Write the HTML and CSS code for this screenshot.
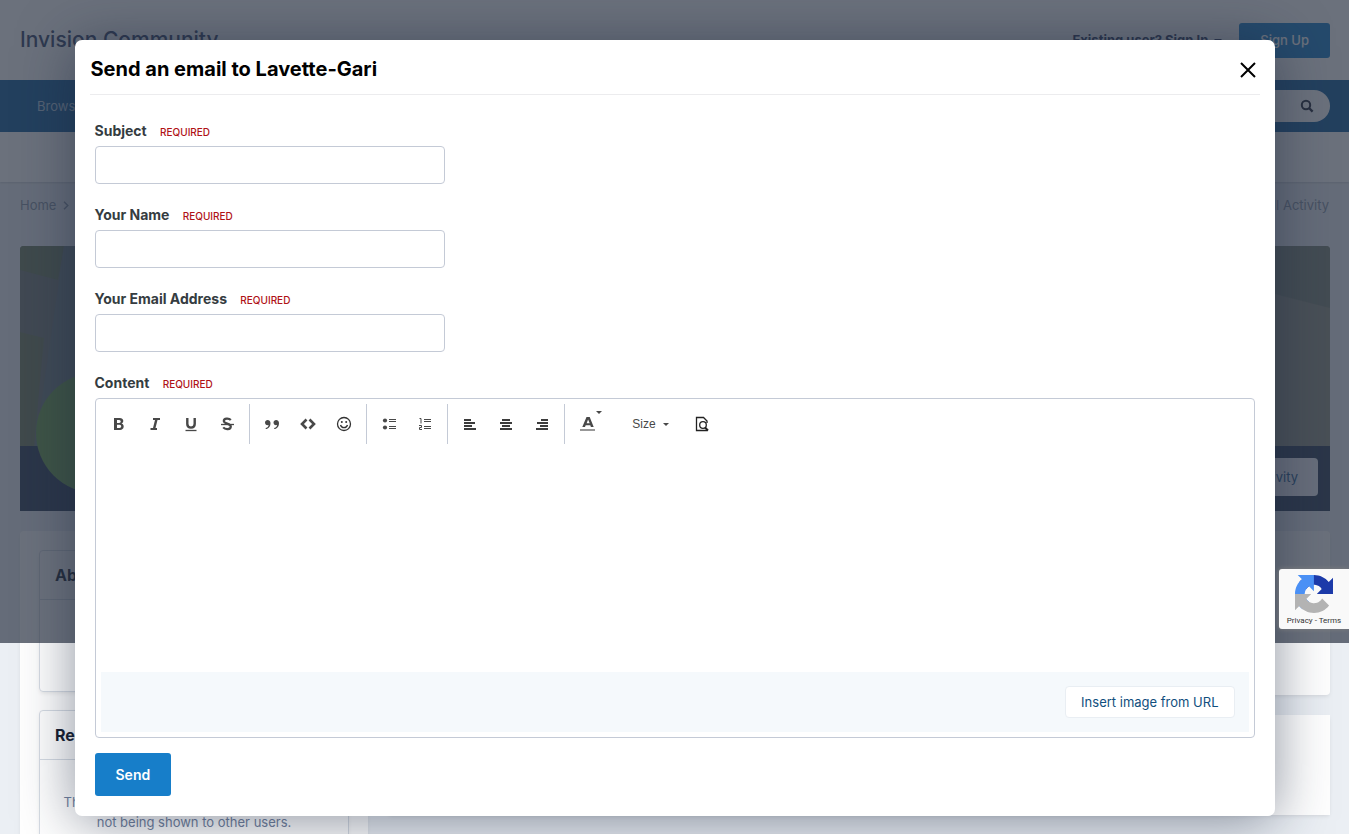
FILE: index.html
```html
<!DOCTYPE html>
<html lang="en">
<head>
<meta charset="utf-8">
<title>Send an email to Lavette-Gari</title>
<link rel="stylesheet" href="styles.css">
</head>
<body>
<div class="page">
  <header class="header">
    <a class="brand" href="#">Invision Community</a>
    <div class="user-nav">
      <a class="sign-in" href="#">Existing user? Sign In <span class="caret"></span></a>
      <a class="sign-up" href="#">Sign Up</a>
    </div>
  </header>
  <nav class="nav">
    <a class="nav-link" href="#">Browse</a>
    <button class="search" type="button" aria-label="Search">
      <svg width="14" height="14" viewBox="0 0 14 14" fill="none" stroke="currentColor" stroke-width="2"><circle cx="6" cy="6" r="4.2"/><path d="M9 9l3.6 3.6" stroke-width="2.4"/></svg>
    </button>
  </nav>
  <div class="subnav"></div>
  <div class="crumbs">
    <a class="crumb" href="#">Home <svg width="6" height="9" viewBox="0 0 6 9" fill="none" stroke="currentColor" stroke-width="1.4"><path d="M1 .7l3.8 3.8L1 8.3"/></svg></a>
    <a class="crumb" href="#">All Activity</a>
  </div>
  <section class="cover">
    <svg class="cover-art" viewBox="0 0 1310 200" preserveAspectRatio="none" aria-hidden="true">
      <rect width="1310" height="200" fill="#7d8475"/>
      <path d="M0 0H52L15 200H0z" fill="#737b76"/>
      <path d="M0 0H44L38 34L0 24z" fill="#6b7c5f"/>
      <path d="M0 86L24 92L14 200H0z" fill="#6f7d60"/>
      <path d="M44 0H250V200H15z" fill="#6c7c80"/>
      <path d="M1200 0H1310V62L1200 34z" fill="#7b8477"/>
      <path d="M1200 34L1310 62V200H1200z" fill="#8c8f82"/>
    </svg>
    <div class="cover-bar">
      <span class="avatar"></span>
      <a class="cover-link" href="#">See their activity</a>
    </div>
  </section>
  <div class="columns">
    <aside class="side">
      <section class="card about"><h3 class="card-title">About</h3></section>
      <section class="card"><h3 class="card-title">Recent Profile Visitors</h3>
        <p class="card-text">The recent visitors block is disabled and is not being shown to other users.</p>
      </section>
    </aside>
    <main class="feed">
      <section class="panel panel-tall"></section>
      <section class="panel"></section>
    </main>
  </div>
</div>
<div class="overlay"></div>
<div class="dialog-layer">
  <div class="dialog" role="dialog" aria-labelledby="dialog-title">
    <div class="dialog-head">
      <h2 class="dialog-title" id="dialog-title">Send an email to Lavette-Gari</h2>
      <button class="close" type="button" aria-label="Close"><svg width="16" height="16" viewBox="0 0 16 16" fill="none" stroke="#000" stroke-width="2"><path d="M1 1l14 14M15 1L1 15"/></svg></button>
    </div>
    <form class="form">
      <div class="field"><label class="label" for="subject">Subject <span class="required">REQUIRED</span></label><input class="text" id="subject" type="text"></div>
      <div class="field"><label class="label" for="name">Your Name <span class="required">REQUIRED</span></label><input class="text" id="name" type="text"></div>
      <div class="field"><label class="label" for="email">Your Email Address <span class="required">REQUIRED</span></label><input class="text" id="email" type="email"></div>
      <div class="field"><label class="label" for="content">Content <span class="required">REQUIRED</span></label>
        <div class="editor">
          <div class="toolbar">
            <div class="group">
              <button class="tool" type="button" aria-label="Bold"><svg width="16" height="16" viewBox="0 0 16 16"><path fill="#484848" fill-rule="evenodd" d="M3 2h5.8c4 0 4.6 4.4 1.7 5.6C14 8.700 13.300 14 9 14H3zm3 2v3h2.200c2 0 2-3 0-3zm0 4.800V12h2.500c2.300 0 2.300-3.200 0-3.200z"/></svg></button>
              <button class="tool" type="button" aria-label="Italic"><svg width="16" height="16" viewBox="0 0 16 16" fill="none" stroke="#484848"><path d="M6 3h7M3.500 13h6.500" stroke-width="2"/><path d="M9.500 3L7 13" stroke-width="2.400"/></svg></button>
              <button class="tool" type="button" aria-label="Underline"><svg width="16" height="16" viewBox="0 0 16 16" fill="none" stroke="#484848"><path d="M4.300 2v6c0 4.800 7.400 4.800 7.400 0V2" stroke-width="2.400"/><path d="M2.500 14.500h11" stroke-width="1.300"/></svg></button>
              <button class="tool" type="button" aria-label="Strikethrough"><svg width="16" height="16" viewBox="0 0 16 16" fill="none" stroke="#484848"><path d="M11.800 4C10 2 4.800 2 4.800 5s7 2.200 7 5.400c0 3.400-5.600 3.400-7.600 1" stroke-width="2.200"/><path d="M2 8.500h13" stroke-width="1.300"/></svg></button>
            </div>
            <div class="group">
              <button class="tool" type="button" aria-label="Quote"><svg width="16" height="16" viewBox="0 0 16 16" fill="#484848"><path d="M1 6.500C1 3 6.500 3 6.500 7c0 3.500-2 6-4.800 6v-1C4 11.500 4.500 10 4.500 9 2.500 9.500 1 8.500 1 6.500zM9.500 6.500c0-3.500 5.500-3.500 5.500.5 0 3.500-2 6-4.800 6v-1c2.300-.5 2.800-2 2.800-3-2 .5-3.500-.5-3.500-2.500z"/></svg></button>
              <button class="tool" type="button" aria-label="Code"><svg width="16" height="16" viewBox="0 0 16 16" fill="none" stroke="#484848" stroke-width="2.600"><path d="M6.500 3.500L2 8l4.500 4.500M9.500 3.500L14 8l-4.500 4.500"/></svg></button>
              <button class="tool" type="button" aria-label="Emoji"><svg width="16" height="16" viewBox="0 0 16 16" fill="none" stroke="#333" stroke-width="1.300"><circle cx="8" cy="8" r="6.500"/><path d="M4.500 9c1 3.500 6 3.500 7 0"/><circle cx="5.800" cy="6" r="1" fill="#333" stroke="none"/><circle cx="10.200" cy="6" r="1" fill="#333" stroke="none"/></svg></button>
            </div>
            <div class="group">
              <button class="tool" type="button" aria-label="Bulleted list"><svg width="16" height="16" viewBox="0 0 16 16"><g fill="#484848"><circle cx="4" cy="4.500" r="2.100"/><circle cx="4" cy="11.500" r="2.100"/></g><path stroke="#484848" d="M8 3.500h7M8 5.500h7M8 10.500h7M8 12.500h7"/></svg></button>
              <button class="tool" type="button" aria-label="Numbered list"><svg width="16" height="16" viewBox="0 0 16 16" fill="none" stroke="#484848"><path d="M7 3.500h7M7 5.500h7M7 10.500h7M7 12.500h7M2.500 2.500h1.500v5M2 9.500h2.500v2H2.500v2h2.500"/></svg></button>
            </div>
            <div class="group">
              <button class="tool" type="button" aria-label="Align left"><svg width="16" height="16" viewBox="0 0 16 16" stroke="#3c3c3c" stroke-width="2"><path d="M2 4h7M2 7h11M2 10h8M2 13h12"/></svg></button>
              <button class="tool" type="button" aria-label="Align center"><svg width="16" height="16" viewBox="0 0 16 16" stroke="#3c3c3c" stroke-width="2"><path d="M4 4h8M2 7h12M4 10h8M2 13h12"/></svg></button>
              <button class="tool" type="button" aria-label="Align right"><svg width="16" height="16" viewBox="0 0 16 16" stroke="#3c3c3c" stroke-width="2"><path d="M7 4h7M3 7h11M6 10h8M2 13h12"/></svg></button>
            </div>
            <div class="group">
              <button class="tool tool-color" type="button" aria-label="Text color"><svg width="24" height="24" viewBox="0 0 24 24"><path d="M7.500 6h3.200l4 10h-2.800l-.6-1.800H6.700L6 16H3.300zM9.100 8.500l-1.500 3.800h3.100z" fill="#484848" fill-rule="evenodd"/><path d="M1 18h15v2H1z" fill="#989898"/><path d="M17 0h6l-3 3z" fill="#484848"/></svg></button>
              <button class="tool tool-size" type="button">Size <span class="caret"></span></button>
              <button class="tool tool-preview" type="button" aria-label="Preview"><svg width="16" height="16" viewBox="0 0 16 16" fill="none" stroke="#222" stroke-width="1.300"><path d="M13 13.500v1H2.500v-13h7L13 5v2"/><circle cx="9" cy="9" r="3.300"/><path d="M11 11.500l3 3" stroke-width="2"/></svg></button>
            </div>
          </div>
          <textarea class="content" id="content"></textarea>
          <div class="attach"><button class="insert" type="button">Insert image from URL</button></div>
        </div>
      </div>
      <button class="send" type="submit">Send</button>
    </form>
  </div>
</div>
<div class="captcha">
  <svg width="38" height="38" viewBox="0 0 64 64" aria-hidden="true">
    <path fill="#1c3aa9" d="M64 31.955a33 33 0 0 0-.037-1.373V4.687l-7.160 7.160C50.944 4.674 42.033.093 32.050.093c-10.389 0-19.617 4.960-25.458 12.640l11.736 11.860a15.550 15.550 0 0 1 4.754-5.334c2.050-1.600 4.952-2.906 8.968-2.906.485 0 .86.057 1.135.163 4.976.393 9.288 3.140 11.828 7.124l-8.307 8.307z"/>
    <path fill="#4a90f5" d="M31.862.094a33 33 0 0 0-1.373.037H4.594l7.160 7.160C4.580 13.150 0 22.060 0 32.044c0 10.390 4.960 19.618 12.640 25.459L24.500 45.767a15.550 15.550 0 0 1-5.334-4.754c-1.600-2.050-2.906-4.952-2.906-8.968 0-.485.057-.86.163-1.135.393-4.976 3.140-9.288 7.124-11.828l8.307 8.307z"/>
    <path fill="#b3b3b3" d="M.001 32.045a33 33 0 0 0 .037 1.373v25.895l7.160-7.160c5.859 7.173 14.770 11.754 24.753 11.754 10.389 0 19.617-4.960 25.458-12.640l-11.736-11.860a15.550 15.550 0 0 1-4.754 5.334c-2.050 1.600-4.952 2.906-8.968 2.906-.485 0-.86-.057-1.135-.163-4.976-.393-9.288-3.140-11.828-7.124l8.307-8.307z"/>
  </svg>
  <span class="captcha-text"><a href="#">Privacy</a> - <a href="#">Terms</a></span>
</div>
</body>
</html>
```
FILE: styles.css
```css
* { box-sizing: border-box; }
body { margin: 0; font-family: Inter, "Liberation Sans", sans-serif; font-size: 14px; line-height: 20px; color: #353c41; overflow: hidden; }
a { color: inherit; text-decoration: none; }
button { font: inherit; border: 0; padding: 0; background: none; cursor: pointer; }
h2, h3, p { margin: 0; }
.caret { display: inline-block; border: 3px solid transparent; border-top-color: currentColor; border-bottom: 0; vertical-align: middle; }

.page { height: 100vh; overflow: hidden; background: #ebeff4; }
.header { height: 80px; padding: 0 19px 0 20px; display: flex; align-items: center; justify-content: space-between; background: #fff; }
.brand { font-size: 21px; font-weight: 500; color: #33446a; }
.user-nav { display: flex; align-items: center; gap: 17px; }
.sign-in { font-size: 13px; font-weight: 700; color: #28365a; }
.sign-in .caret { border-width: 4px 4px 0; margin-left: 3px; }
.sign-up { padding: 7px 21px 8px; border-radius: 3px; background: #177ec9; color: #fff; font-size: 13px; font-weight: 500; }
.nav { height: 52px; padding: 0 19px 0 37px; display: flex; align-items: center; justify-content: space-between; background: #0f5d9c; }
.nav-link { color: #b3cbe0; font-size: 13px; }
.search { width: 250px; height: 32px; border-radius: 16px; padding-right: 16px; display: flex; align-items: center; justify-content: flex-end; background: #fff; color: #1b2233; }
.subnav { height: 50px; background: #fff; box-shadow: 0 1px 2px rgba(0, 0, 0, .15); }
.crumbs { height: 64px; padding: 0 20px 18px; display: flex; align-items: center; justify-content: space-between; font-size: 13px; color: #8794a8; }
.crumb svg { margin-left: 3px; }
.cover { margin: 0 19px 20px 20px; border-radius: 4px 4px 0 0; overflow: hidden; }
.cover-art { display: block; width: 100%; height: 200px; }
.cover-bar { height: 65px; padding: 0 12px 4px 17px; position: relative; display: flex; align-items: center; justify-content: flex-end; background: #2b3a56; }
.avatar { position: absolute; left: 16px; bottom: 18px; width: 120px; height: 120px; border-radius: 50%; background: #6a9e4c; }
.cover-link { padding: 9px 20px; border-radius: 4px; background: #f4f6fa; color: #215a90; font-size: 13px; }
.columns { margin: 0 19px 0 20px; display: flex; align-items: flex-start; gap: 20px; }
.side { width: 348px; height: 400px; padding: 19px; display: flex; flex-direction: column; gap: 18px; border-radius: 4px; background: #fff; box-shadow: 0 2px 4px -1px rgba(0, 0, 0, .1); }
.card { border: 1px solid #d6dce4; border-radius: 4px; box-shadow: 0 2px 4px -1px rgba(0, 0, 0, .1); }
.about { min-height: 142px; }
.card-title { padding: 14px 15px; border-bottom: 1px solid #d6dce4; font-size: 16px; font-weight: 700; color: #171e30; }
.card-text { padding: 32px 16px; text-align: center; color: #7282a0; font-size: 13px; }
.feed { flex: 1; display: flex; flex-direction: column; gap: 20px; }
.panel { height: 100px; background: #fff; box-shadow: 0 2px 4px -1px rgba(0, 0, 0, .1); }
.panel-tall { height: 164px; border-radius: 4px; }

.overlay { position: absolute; inset: 0 0 auto; height: 643px; background: rgba(44, 52, 69, .7); }
.captcha { position: absolute; right: 0; top: 569px; width: 70px; height: 60px; padding-top: 6px; display: flex; flex-direction: column; align-items: center; border-radius: 3px 0 0 3px; background: #f9f9f9; box-shadow: 0 0 5px #808080; }
.captcha-text { font: 8px/16px Roboto, sans-serif; color: #333; }

.dialog-layer { position: absolute; inset: 40px 0 auto; padding: 0 20px; }
.dialog { max-width: 1200px; margin: 0 auto; border-radius: 7px; background: #fff; box-shadow: 0 5px 55px rgba(23, 35, 60, .5); }
.dialog-head { height: 55px; margin: 0 15px; padding: 5px 4px 0 1px; display: flex; align-items: center; justify-content: space-between; border-bottom: 1px solid #ececee; }
.dialog-title { font-size: 20px; font-weight: 700; line-height: 24px; color: #000; padding-bottom: 2px; }
.close { display: flex; }
.form { padding: 26px 20px 20px; }
.field { margin-bottom: 21px; }
.field:last-of-type { margin-bottom: 15px; }
.label { display: block; height: 25px; font-weight: 700; }
.required { margin-left: 10px; font-size: 10px; font-weight: 500; color: #b01116; }
.text { display: block; width: 350px; max-width: 100%; height: 38px; border: 1px solid #c4cad6; border-radius: 4px; background: #fff; }
.editor { border: 1px solid #c4cad6; border-radius: 4px; padding: 5px; }
.toolbar { height: 40px; display: flex; }
.group { display: flex; align-items: center; padding: 0 4px; border-right: 1px solid #c4cad6; }
.group:first-child { padding: 0 4px 0 0; }
.group:last-child { padding: 0 3px; border: 0; }
.tool { width: 36px; height: 36px; display: flex; align-items: center; justify-content: center; color: #484848; }
.tool-color { width: 46px; height: 40px; padding-bottom: 2px; }
.tool-size { width: 74px; gap: 7px; font: 12px "Liberation Sans", Arial, sans-serif; }
.tool-preview { width: 28px; }
.content { display: block; width: 100%; height: 228px; border: 0; outline: 0; resize: none; }
.attach { height: 60px; padding: 0 14px; display: flex; align-items: center; justify-content: flex-end; background: #f5f9fc; }
.insert { padding: 5px 15px; border: 1px solid #e9eef3; border-radius: 4px; background: #fff; color: #114f7e; font-size: 13px; }
.send { padding: 12px 21px 11px; border-radius: 3px; background: #177ec9; color: #fff; font-weight: 600; }
```
